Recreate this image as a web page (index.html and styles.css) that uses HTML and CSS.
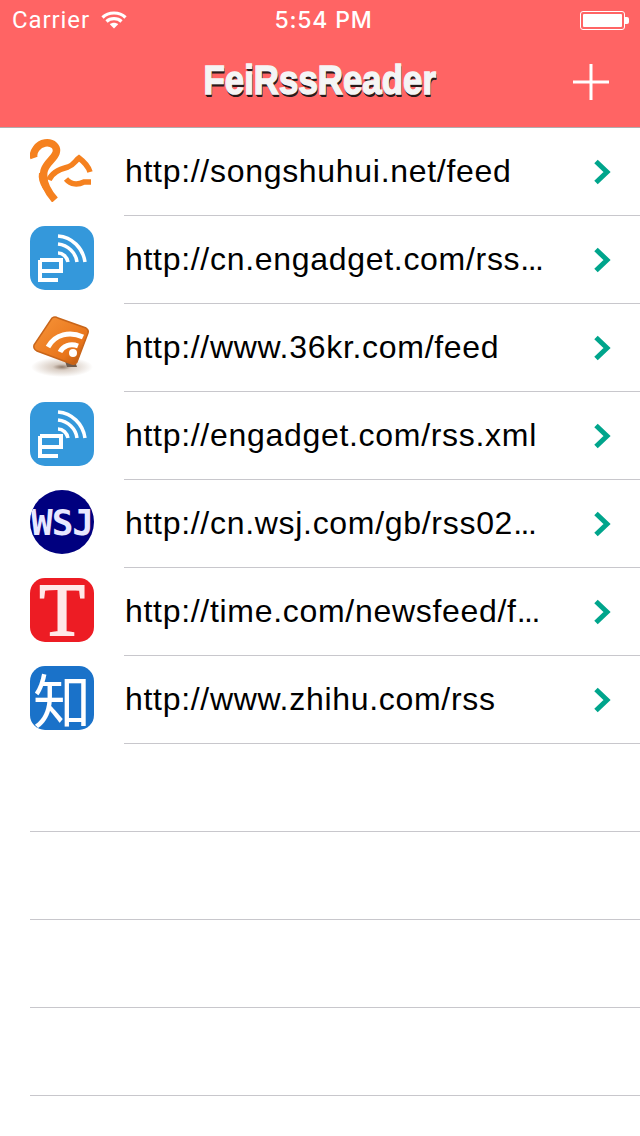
FILE: index.html
```html
<!DOCTYPE html>
<html lang="en">
<head>
<meta charset="utf-8">
<title>FeiRssReader</title>
<link rel="stylesheet" href="styles.css">
</head>
<body>
<header class="header">
  <div class="status">
    <div class="status-left">
      <span>Carrier</span>
      <svg class="wifi" width="26" height="18" viewBox="0 0 26 18"><path d="M1.500 6.500C7.500 0.500 18.500 0.500 24.500 6.500" class="wifi-arc"/><path d="M5.500 10.500C9.500 6.700 16.500 6.700 20.500 10.500" class="wifi-arc"/><path d="M13 17.500L8.800 13.300C11 11.300 15 11.300 17.200 13.300Z" class="wifi-dot"/></svg>
    </div>
    <div class="status-time">5:54 PM</div>
    <div class="status-right">
      <div class="battery"><div class="battery-fill"></div></div>
      <div class="battery-tip"></div>
    </div>
  </div>
  <div class="nav">
    <h1 class="title">FeiRssReader</h1>
    <svg class="plus" width="36" height="36" viewBox="0 0 36 36"><path d="M18 0V36M0 18H36" class="plus-line"/></svg>
  </div>
</header>
<main class="list">
  <div class="row">
    <svg class="icon" viewBox="0 0 64 64"><path d="M4 20C2 14 8 6 15 5C23 4 28 9 26 15C24 21 16 25 14 33C12 43 18 54 25 62" class="sq"/><path d="M9 35C7 45 15 56 25 62C20 54 17 46 17 34Z" class="sq-fill"/><path d="M19 42C22 34 30 31 38 29C44 27 45 23 49 20C53 23 58 27 60 34" class="sq sq-thin"/><path d="M36 41C41 47 48 47 54 44H61" class="sq sq-thin"/></svg>
    <div class="url"><span>http://songshuhui.net/feed</span></div>
    <svg class="chev" width="18" height="26" viewBox="0 0 18 26"><path d="M3 2.500L14 13L3 23.500" class="chev-line"/></svg>
  </div>
  <div class="row">
    <svg class="icon" viewBox="0 0 64 64"><rect width="64" height="64" rx="15" class="eng-bg"/><path d="M28 10C42 11 53 22 55 36M28 18C38 19 46 27 47 36M28 27C33 27 37 31 38 36" class="eng-arc"/><path d="M10 34H31V45H10M10 34V54H28" class="eng-e"/></svg>
    <div class="url"><span>http://cn.engadget.com/rss<span class="ell">...</span></span></div>
    <svg class="chev" width="18" height="26" viewBox="0 0 18 26"><path d="M3 2.500L14 13L3 23.500" class="chev-line"/></svg>
  </div>
  <div class="row">
    <svg class="icon" viewBox="0 0 64 64"><defs><linearGradient id="rssg" x1="0" y1="0" x2="1" y2="1"><stop offset="0" stop-color="#f7953a"/><stop offset="0.7" stop-color="#e8741a"/><stop offset="1" stop-color="#a8500f"/></linearGradient><radialGradient id="rsss"><stop offset="0" stop-color="#8f7a6a"/><stop offset="0.3" stop-color="#d8ccc2"/><stop offset="1" stop-color="#fff"/></radialGradient></defs><ellipse cx="32" cy="53" rx="31" ry="10" fill="url(#rsss)"/><path d="M35 47H45L47 53H37Z" class="rss-stand"/><path d="M22 4Q25 2 28 4L56 14Q59 16 58 19L47 48Q45 51 42 50L7 37Q3 35 4 31Z" fill="url(#rssg)" class="rss-body"/><path d="M18 33C25 20 40 17 53 23M30 38C33 32 40 29 48 32" class="rss-arc"/><circle cx="43" cy="39" r="4" class="rss-dot"/></svg>
    <div class="url"><span>http://www.36kr.com/feed</span></div>
    <svg class="chev" width="18" height="26" viewBox="0 0 18 26"><path d="M3 2.500L14 13L3 23.500" class="chev-line"/></svg>
  </div>
  <div class="row">
    <svg class="icon" viewBox="0 0 64 64"><rect width="64" height="64" rx="15" class="eng-bg"/><path d="M28 10C42 11 53 22 55 36M28 18C38 19 46 27 47 36M28 27C33 27 37 31 38 36" class="eng-arc"/><path d="M10 34H31V45H10M10 34V54H28" class="eng-e"/></svg>
    <div class="url"><span>http://engadget.com/rss.xml</span></div>
    <svg class="chev" width="18" height="26" viewBox="0 0 18 26"><path d="M3 2.500L14 13L3 23.500" class="chev-line"/></svg>
  </div>
  <div class="row">
    <div class="icon wsj">WSJ</div>
    <div class="url"><span>http://cn.wsj.com/gb/rss02<span class="ell">...</span></span></div>
    <svg class="chev" width="18" height="26" viewBox="0 0 18 26"><path d="M3 2.500L14 13L3 23.500" class="chev-line"/></svg>
  </div>
  <div class="row">
    <div class="icon time">T</div>
    <div class="url"><span>http://time.com/newsfeed/f<span class="ell">...</span></span></div>
    <svg class="chev" width="18" height="26" viewBox="0 0 18 26"><path d="M3 2.500L14 13L3 23.500" class="chev-line"/></svg>
  </div>
  <div class="row">
    <div class="icon zhihu">知</div>
    <div class="url"><span>http://www.zhihu.com/rss</span></div>
    <svg class="chev" width="18" height="26" viewBox="0 0 18 26"><path d="M3 2.500L14 13L3 23.500" class="chev-line"/></svg>
  </div>
  <div class="row-empty"></div>
  <div class="row-empty"></div>
  <div class="row-empty"></div>
  <div class="row-empty"></div>
</main>
</body>
</html>
```
FILE: styles.css
```css
* { box-sizing: border-box; }
html, body { margin: 0; padding: 0; }
body { width: 640px; height: 1136px; overflow: hidden; background: #fff; font-family: "Liberation Sans", Arial, sans-serif; color: #000; }
.header { height: 128px; background: #ff6464; border-bottom: 1px solid #aeaeb0; color: #fff; }
.status { height: 40px; display: flex; align-items: center; justify-content: space-between; padding: 0 12px; position: relative; font-size: 24px; }
.status-left { display: flex; align-items: center; gap: 11px; font-family: Roboto, sans-serif; letter-spacing: 0.9px; }
.status-time { position: absolute; left: 0; right: 0; text-align: center; padding-left: 7px; font-family: "Inter", sans-serif; font-weight: 500; font-size: 23px; letter-spacing: 0.8px; }
.wifi-arc { fill: none; stroke: #fff; stroke-width: 3.200; }
.wifi-dot { fill: #fff; }
.status-right { display: flex; align-items: center; margin-right: -1px; }
.battery { width: 45px; height: 19px; border: 1px solid #fff; border-radius: 3px; padding: 2px; }
.battery-fill { height: 100%; background: #fff; border-radius: 1px; }
.battery-tip { width: 4px; height: 7px; background: #fff; border-radius: 0 2px 2px 0; }
.nav { height: 87px; display: flex; align-items: center; justify-content: center; position: relative; }
.title { margin: 0; font-family: "Liberation Sans", sans-serif; font-weight: 700; font-size: 41px; color: #f5f5f5; -webkit-text-stroke: 1.500px #f5f5f5; text-shadow: 0 2px 0 #2a1a1a, 1px 2px 0 #2a1a1a, 1px 3px 0 #2a1a1a; position: relative; top: -3px; transform: scaleX(0.85); }
.plus { position: absolute; left: 573px; top: 24px; }
.plus-line { stroke: #fff; stroke-width: 3; fill: none; }
.row { height: 88px; display: flex; align-items: center; padding-left: 30px; }
.icon { width: 64px; height: 64px; flex: none; margin-top: -4px; }
.url { flex: 1; height: 88px; margin-left: 30px; padding-left: 1px; padding-bottom: 1px; display: flex; align-items: center; font-size: 32px; letter-spacing: 0.7px; border-bottom: 1px solid #c8c7cc; white-space: nowrap; }
.ell { letter-spacing: -1.500px; }
.row .chev { position: absolute; left: 593px; }
.chev-line { fill: none; stroke: #00a58c; stroke-width: 5; }
.row-empty { height: 88px; margin-left: 30px; border-bottom: 1px solid #c8c7cc; }
.sq { fill: none; stroke: #f5811f; stroke-width: 7.500; }
.sq-thin { stroke-width: 5.500; }
.sq-fill { fill: #f5811f; }
.eng-bg { fill: #3498db; }
.eng-arc { fill: none; stroke: #fff; stroke-width: 3.500; }
.eng-e { fill: none; stroke: #fff; stroke-width: 4; }
.rss-stand { fill: #6d5a4c; }
.rss-body { stroke: #c8651a; stroke-width: 1.500; }
.rss-arc { fill: none; stroke: #fff; stroke-width: 5; }
.rss-dot { fill: #fff; }
.wsj { border-radius: 50%; background: #00007f; color: #e8e8ff; display: flex; align-items: center; justify-content: center; overflow: hidden; font-family: "DejaVu Sans Mono", monospace; font-weight: 700; font-size: 36px; letter-spacing: -1px; }
.time { border-radius: 15px; background: #ed1c24; color: #ffe8e8; display: flex; align-items: center; justify-content: center; font-family: "Liberation Serif", serif; font-size: 74px; line-height: 64px; -webkit-text-stroke: 2px #ffe8e8; }
.zhihu { border-radius: 15px; background: #1a72c9; color: #fff; display: flex; align-items: center; justify-content: center; font-family: "Noto Sans CJK SC", sans-serif; font-size: 58px; line-height: 64px; }
```
